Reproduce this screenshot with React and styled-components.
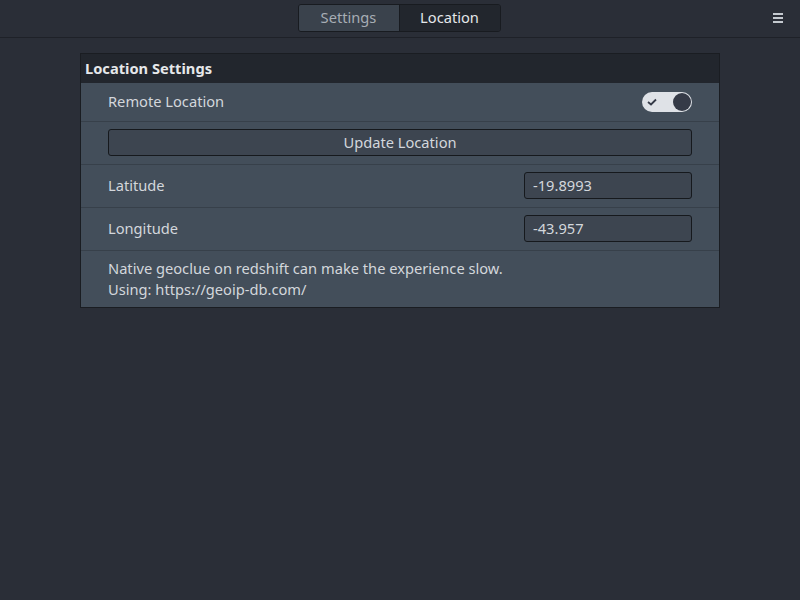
import React, { useState } from 'react';
import styled, { createGlobalStyle } from 'styled-components';

const GlobalStyle = createGlobalStyle`
  html, body {
    margin: 0;
    padding: 0;
    background: #2a2e37;
    font-family: 'Noto Sans', 'Open Sans', sans-serif;
    font-size: 14.67px;
    color: #d3d7dc;
  }
`;

const Page = styled.div`
  width: 800px;
  height: 600px;
  background: #2a2e37;
`;

const TopBar = styled.div`
  height: 37px;
  border-bottom: 1px solid #1e2128;
  display: flex;
  align-items: center;
  justify-content: center;
  padding-right: 2px;
  position: relative;
`;

const Tabs = styled.div`
  display: flex;
  margin-top: -2px;
  border: 1px solid #181b20;
  border-radius: 3px;
  overflow: hidden;
`;

const Tab = styled.button`
  width: 100px;
  height: 26px;
  border: none;
  margin: 0;
  padding: 0 0 2px;
  font-family: inherit;
  font-size: 14.67px;
  background: ${(p) => (p.$active ? '#22262d' : '#3a424c')};
  color: ${(p) => (p.$active ? '#e4e7ea' : '#a7adb4')};
  & + & {
    width: 101px;
    border-left: 1px solid #181b20;
  }
`;

const Menu = styled.div`
  position: absolute;
  right: 17px;
  top: 13px;
  width: 10px;
  display: flex;
  flex-direction: column;
  gap: 2px;
  span {
    height: 2px;
    background: #c4c9cf;
  }
`;

const Panel = styled.div`
  margin: 15px 0 0 80px;
  width: 638px;
  border: 1px solid #1a1d22;
  background: #434e5a;
`;

const PanelTitle = styled.div`
  height: 29px;
  box-sizing: border-box;
  padding: 0 0 1px 4px;
  background: #22262d;
  color: #e6e8ea;
  font-weight: 700;
  display: flex;
  align-items: center;
`;

const Row = styled.div`
  display: flex;
  align-items: center;
  justify-content: space-between;
  box-sizing: border-box;
  padding: 0 27px 1px;
  height: ${(p) => p.$h || 43}px;
  & + & {
    border-top: 1px solid #37404a;
  }
`;

const Note = styled.div`
  padding: 7px 27px 7px;
  line-height: 21px;
  border-top: 1px solid #37404a;
`;

const Label = styled.span`
  color: #d3d7dc;
  margin-top: -1px;
`;

const WideButton = styled.button`
  width: 100%;
  height: 27px;
  background: #3d4550;
  border: 1px solid #16191d;
  border-radius: 3px;
  color: #d3d7dc;
  font-family: inherit;
  font-size: 14.67px;
  padding: 0 0 2px;
`;

const Field = styled.input`
  width: 168px;
  height: 27px;
  box-sizing: border-box;
  background: #3d4550;
  border: 1px solid #16191d;
  border-radius: 3px;
  color: #d3d7dc;
  font-family: inherit;
  font-size: 14.67px;
  padding: 0 8px 2px;
  outline: none;
`;

const Switch = styled.div`
  width: 50px;
  height: 20px;
  border-radius: 10px;
  background: #dfe2e7;
  position: relative;
  cursor: pointer;
`;

const Knob = styled.div`
  position: absolute;
  top: 1px;
  right: 1px;
  width: 18px;
  height: 18px;
  border-radius: 50%;
  background: #353a47;
`;

const Check = styled.svg`
  position: absolute;
  left: 5px;
  top: 6px;
`;

export default function App() {
  const [remote, setRemote] = useState(true);
  return (
    <>
      <GlobalStyle />
      <Page>
        <TopBar>
          <Tabs>
            <Tab>Settings</Tab>
            <Tab $active>Location</Tab>
          </Tabs>
          <Menu>
            <span />
            <span />
            <span />
          </Menu>
        </TopBar>
        <Panel>
          <PanelTitle>Location Settings</PanelTitle>
          <Row $h={38}>
            <Label>Remote Location</Label>
            <Switch onClick={() => setRemote(!remote)}>
              <Check width="10" height="8" viewBox="0 0 10 8">
                <path d="M1 4 L4 6.5 L9 1.5" stroke="#353a47" strokeWidth="1.8" fill="none" />
              </Check>
              <Knob />
            </Switch>
          </Row>
          <Row>
            <WideButton>Update Location</WideButton>
          </Row>
          <Row>
            <Label>Latitude</Label>
            <Field defaultValue="-19.8993" />
          </Row>
          <Row>
            <Label>Longitude</Label>
            <Field defaultValue="-43.957" />
          </Row>
          <Note>
            Native geoclue on redshift can make the experience slow.
            <br />
            Using: https://geoip-db.com/
          </Note>
        </Panel>
      </Page>
    </>
  );
}
